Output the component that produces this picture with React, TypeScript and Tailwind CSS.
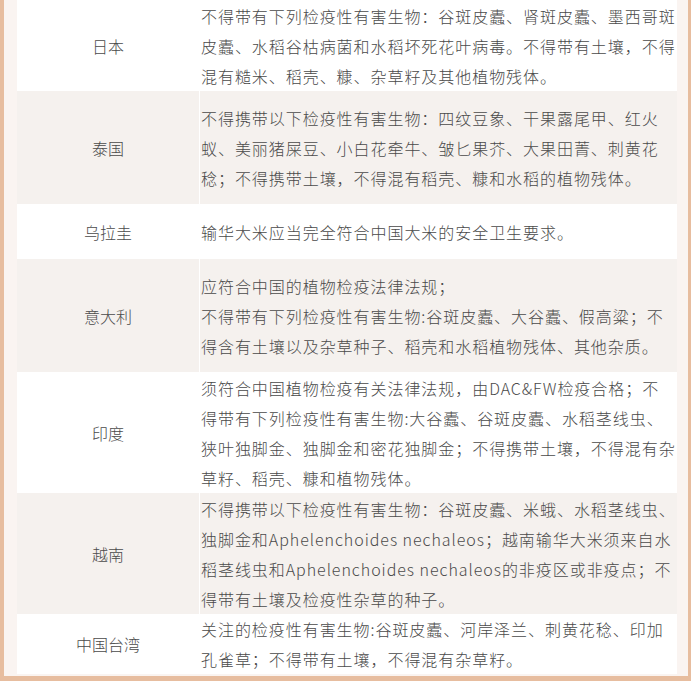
const rows: { name: string; lines: string[]; h: string; shade: boolean }[] = [
  {
    name: "日本",
    h: "h-[91px]",
    shade: false,
    lines: [
      "不得带有下列检疫性有害生物：谷斑皮蠹、肾斑皮蠹、墨西哥斑",
      "皮蠹、水稻谷枯病菌和水稻坏死花叶病毒。不得带有土壤，不得",
      "混有糙米、稻壳、糠、杂草籽及其他植物残体。",
    ],
  },
  {
    name: "泰国",
    h: "h-[113px]",
    shade: true,
    lines: [
      "不得携带以下检疫性有害生物：四纹豆象、干果露尾甲、红火",
      "蚁、美丽猪屎豆、小白花牵牛、皱匕果芥、大果田菁、刺黄花",
      "稔；不得携带土壤，不得混有稻壳、糠和水稻的植物残体。",
    ],
  },
  {
    name: "乌拉圭",
    h: "h-[55px]",
    shade: false,
    lines: ["输华大米应当完全符合中国大米的安全卫生要求。"],
  },
  {
    name: "意大利",
    h: "h-[113px]",
    shade: true,
    lines: [
      "应符合中国的植物检疫法律法规；",
      "不得带有下列检疫性有害生物:谷斑皮蠹、大谷蠹、假高粱；不",
      "得含有土壤以及杂草种子、稻壳和水稻植物残体、其他杂质。",
    ],
  },
  {
    name: "印度",
    h: "h-[121px]",
    shade: false,
    lines: [
      "须符合中国植物检疫有关法律法规，由DAC&FW检疫合格；不",
      "得带有下列检疫性有害生物:大谷蠹、谷斑皮蠹、水稻茎线虫、",
      "狭叶独脚金、独脚金和密花独脚金；不得携带土壤，不得混有杂",
      "草籽、稻壳、糠和植物残体。",
    ],
  },
  {
    name: "越南",
    h: "h-[121px]",
    shade: true,
    lines: [
      "不得携带以下检疫性有害生物：谷斑皮蠹、米蛾、水稻茎线虫、",
      "独脚金和Aphelenchoides nechaleos；越南输华大米须来自水",
      "稻茎线虫和Aphelenchoides nechaleos的非疫区或非疫点；不",
      "得带有土壤及检疫性杂草的种子。",
    ],
  },
  {
    name: "中国台湾",
    h: "h-[60px]",
    shade: false,
    lines: [
      "关注的检疫性有害生物:谷斑皮蠹、河岸泽兰、刺黄花稔、印加",
      "孔雀草；不得带有土壤，不得混有杂草籽。",
    ],
  },
];

export default function App() {
  return (
    <div
      className="w-[691px] h-[681px] overflow-hidden bg-[#e7bd9f] pl-[4px] pr-[3px] pb-[5px]"
      style={{ fontFamily: '"Noto Sans CJK SC", "Noto Sans", sans-serif' }}
    >
      <div className="h-full bg-[#faf4f1] pl-[13px] pr-[11px] pb-[2px]">
        <div className="flex flex-col text-[#4a4a4a] text-[16px] font-light">
          {rows.map((r) => (
            <div key={r.name} className={`flex ${r.h} ${r.shade ? "bg-[#f5f1ee]" : "bg-white"}`}>
              <div className="w-[183px] shrink-0 flex items-center justify-center border-r border-white">
                {r.name}
              </div>
              <div className="flex-1 flex flex-col justify-center pl-[1px] leading-[30px] whitespace-nowrap tracking-[0.95px]">
                {r.lines.map((l, i) => (
                  <div key={i}>{l}</div>
                ))}
              </div>
            </div>
          ))}
        </div>
      </div>
    </div>
  );
}
